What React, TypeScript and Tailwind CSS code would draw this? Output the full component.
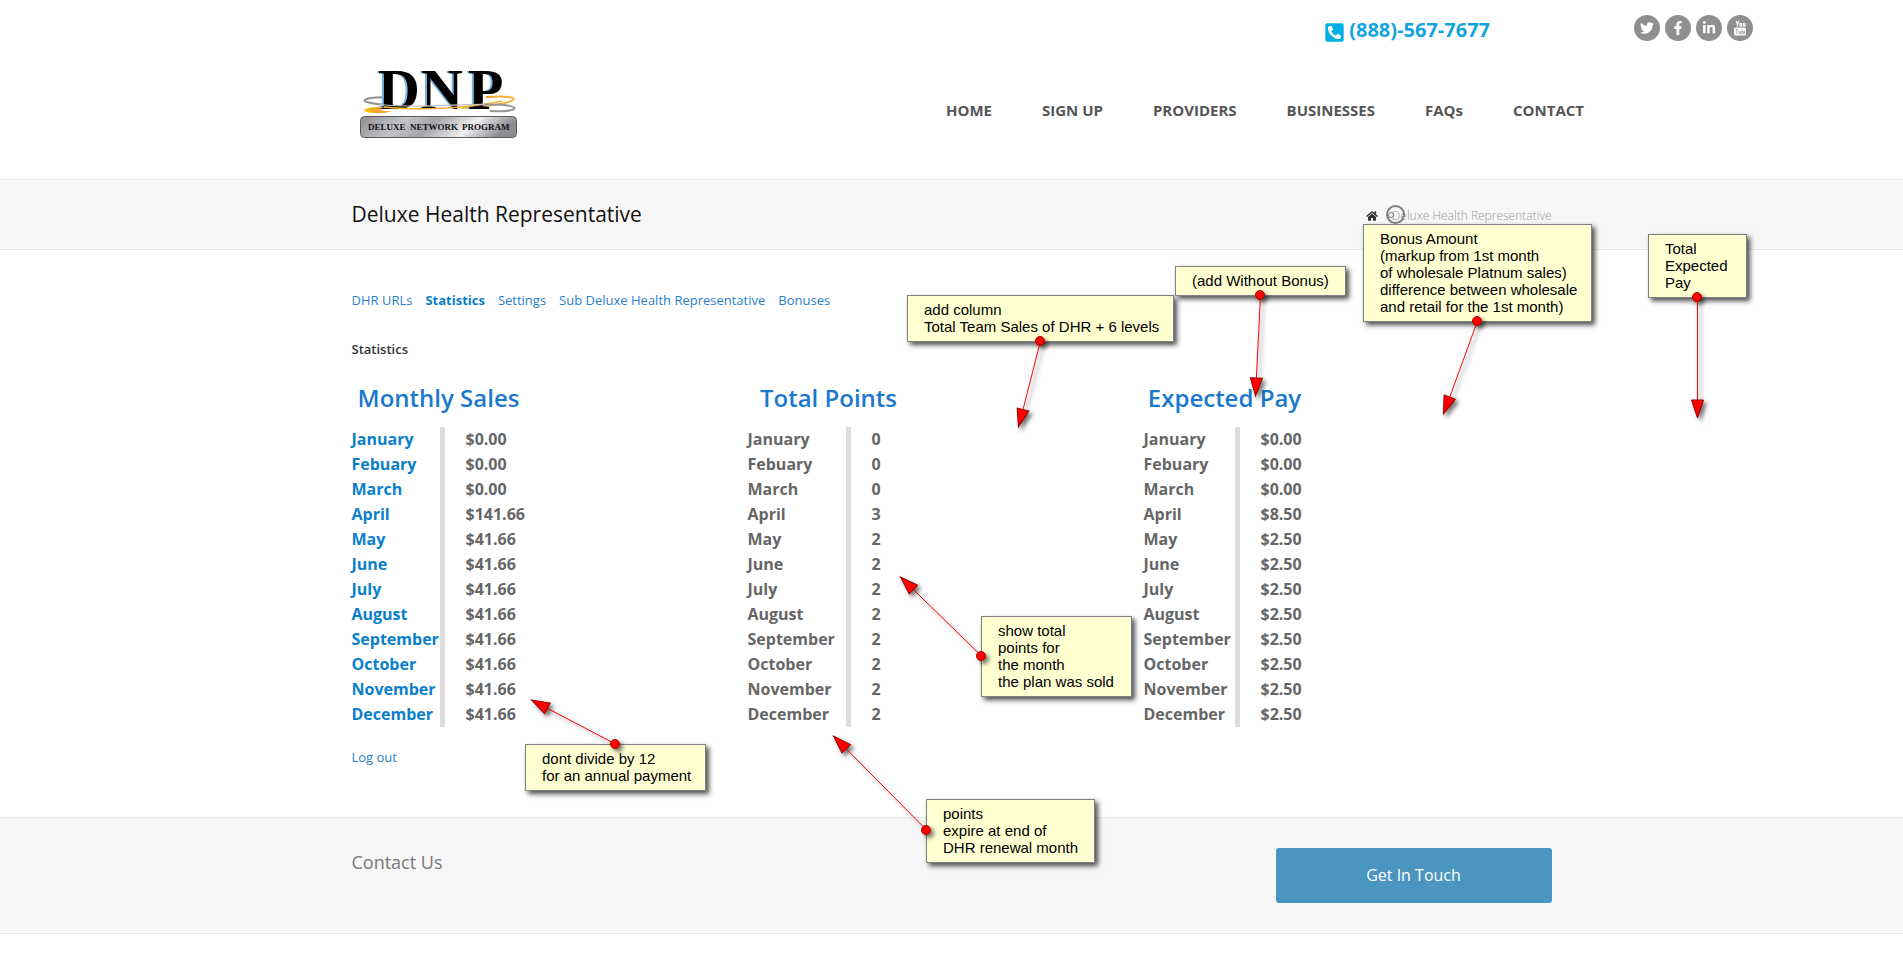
import {
    FaFacebookF,
    FaHome,
    FaLinkedinIn,
    FaPhoneSquareAlt,
    FaTwitter,
} from "react-icons/fa";

const navigation = ["HOME", "SIGN UP", "PROVIDERS", "BUSINESSES", "FAQs", "CONTACT"];

const tabs = [
    "DHR URLs",
    "Statistics",
    "Settings",
    "Sub Deluxe Health Representative",
    "Bonuses",
];

const months = [
    "January",
    "Febuary",
    "March",
    "April",
    "May",
    "June",
    "July",
    "August",
    "September",
    "October",
    "November",
    "December",
];

const statistics = [
    {
        title: "Monthly Sales",
        tableClass: "w-[174px]",
        colClass: "w-[93px]",
        monthClass: "text-[#0a80cc]",
        values: ["$0.00", "$0.00", "$0.00", "$141.66", ...Array(8).fill("$41.66")],
    },
    {
        title: "Total Points",
        tableClass: "w-[162px]",
        colClass: "w-[103px]",
        monthClass: "",
        values: ["0", "0", "0", "3", ...Array(8).fill("2")],
    },
    {
        title: "Expected Pay",
        tableClass: "w-[162px]",
        colClass: "w-[96px]",
        monthClass: "",
        values: ["$0.00", "$0.00", "$0.00", "$8.50", ...Array(8).fill("$2.50")],
    },
];

// Notes sit on a free canvas, measured from the left edge of the container
const notes = [
    {
        className: "left-[555px] top-[295px] w-[267px]",
        lines: ["add column", "Total Team Sales of DHR + 6 levels"],
        from: [688, 341],
        to: [666, 427],
    },
    {
        className: "left-[823px] top-[266px] w-[171px]",
        lines: ["(add Without Bonus)"],
        from: [908, 295],
        to: [903, 396],
    },
    {
        className: "left-[1011px] top-[224px] w-[229px]",
        lines: [
            "Bonus Amount",
            "(markup from 1st month",
            "of wholesale Platnum sales)",
            "difference between wholesale",
            "and retail for the 1st month)",
        ],
        from: [1125, 321],
        to: [1091, 414],
    },
    {
        className: "left-[1296px] top-[234px] w-[99px]",
        lines: ["Total", "Expected", "Pay"],
        from: [1345, 297],
        to: [1345, 418],
    },
    {
        className: "left-[173px] top-[744px] w-[181px]",
        lines: ["dont divide by 12", "for an annual payment"],
        from: [263, 744],
        to: [179, 700],
    },
    {
        className: "left-[629px] top-[616px] w-[151px]",
        lines: ["show total", "points for", "the month", "the plan was sold"],
        from: [629, 656],
        to: [548, 577],
    },
    {
        className: "left-[574px] top-[799px] w-[169px]",
        lines: ["points", "expire at end of", "DHR renewal month"],
        from: [574, 830],
        to: [481, 736],
    },
];

const Logo = () => (
    <svg
        className="shrink-0 overflow-visible"
        width="172"
        height="106"
        viewBox="352 57 172 106"
        role="img"
        aria-label="Deluxe Network Program"
    >
        <defs>
            <linearGradient id="plate" x1="0" x2="1" y1="0" y2="0.15">
                <stop offset="0" stopColor="#8d8d92" />
                <stop offset="0.3" stopColor="#c4c4c8" />
                <stop offset="0.5" stopColor="#a5a5aa" />
                <stop offset="0.76" stopColor="#efeff1" />
                <stop offset="1" stopColor="#8b8b90" />
            </linearGradient>
            <linearGradient id="gold" x1="0" x2="1" y1="0" y2="0">
                <stop offset="0" stopColor="#fbc40c" />
                <stop offset="0.5" stopColor="#f0a030" />
                <stop offset="1" stopColor="#f7bc3a" />
            </linearGradient>
        </defs>
        <path
            d="M486 97 C506 96 517 97 513 100 C509 103 490 106 462 108"
            fill="none"
            stroke="url(#gold)"
            strokeWidth="2"
        />
        <path
            d="M388 97 C368 97 360 100 367 102 C374 104 384 105 398 106"
            fill="none"
            stroke="#909094"
            strokeWidth="2"
        />
        <g fontFamily="Liberation Serif, serif" fontWeight="700" fontSize="58">
            <g fill="#74b6e6">
                <text x="376" y="109">D</text>
                <text x="419" y="109">N</text>
                <text x="466" y="109">P</text>
            </g>
            <g fill="#000">
                <text x="378" y="109">D</text>
                <text x="421" y="109">N</text>
                <text x="468" y="109">P</text>
            </g>
        </g>
        <path
            d="M384 113 C362 114 359 109 372 107.5 C376 107 380 107 388 107 C378 108 376 110.5 392 111.5Z"
            fill="url(#gold)"
        />
        <path
            d="M384 107 C420 111 470 108 502 101"
            fill="none"
            stroke="url(#gold)"
            strokeWidth="1.4"
        />
        <path
            d="M380 104.5 C420 109 450 104 486 104.5"
            fill="none"
            stroke="#c4c4c8"
            strokeWidth="1.2"
        />
        <path
            d="M484 104.5 C508 104 519 107 513 109.5 C508 111.5 498 111.5 490 111"
            fill="none"
            stroke="#98989c"
            strokeWidth="2"
        />
        <rect
            x="360.5"
            y="116.5"
            width="156"
            height="21"
            rx="4"
            fill="url(#plate)"
            stroke="#5c5c60"
        />
        <g
            fill="#111"
            fontFamily="Liberation Serif, serif"
            fontWeight="700"
            fontSize="9"
        >
            <text x="368" y="130">DELUXE</text>
            <text x="410" y="130">NETWORK</text>
            <text x="462" y="130">PROGRAM</text>
        </g>
    </svg>
);

const YoutubeIcon = () => (
    <svg width="14" height="16" viewBox="0 0 14 16" aria-hidden="true">
        <path
            d="M3 1 4.5 4v2.5M6 1 4.5 4M7 3.5v2.5h1.5V3.5ZM10.500 3V6h1.500V3"
            fill="none"
            stroke="#fff"
            strokeWidth="1.2"
        />
        <rect x="1" y="7.5" width="12" height="8" rx="1.5" fill="#fff" />
        <path
            d="M2.5 9.5h2.5M3.7 9.5V14M6 11v3h1.5v-3M9 9v5h1.2v-2.5H9M12 13.5h-.8v-2h.8"
            fill="none"
            stroke="#8f8f8f"
            strokeWidth="0.7"
        />
    </svg>
);

const socials = [
    { name: "Twitter", icon: <FaTwitter size={14} /> },
    { name: "Facebook", icon: <FaFacebookF size={14} /> },
    { name: "LinkedIn", icon: <FaLinkedinIn size={14} /> },
    { name: "YouTube", icon: <YoutubeIcon /> },
];

const Header = () => (
    <header className="mx-auto max-w-[1603px] pt-[15px]">
        <div className="flex h-[26px] items-center justify-end gap-36">
            <a
                className="flex items-center gap-1 pt-1 text-[20px] leading-6 font-bold text-[#12a5dc]"
                href="#phone"
            >
                <FaPhoneSquareAlt className="mt-1 text-[#00aee6]" size={21} />
                (888)-567-7677
            </a>
            <div className="flex gap-[5px]">
                {socials.map((item) => (
                    <a
                        className="flex size-[26px] items-center justify-center rounded-full bg-[#8f8f8f] text-white"
                        href="#social"
                        aria-label={item.name}
                        key={item.name}
                    >
                        {item.icon}
                    </a>
                ))}
            </div>
        </div>
        <div className="flex items-center justify-between py-4 pr-[169px] pl-[202px]">
            <Logo />
            <nav className="flex gap-[50px] text-[15px] leading-6 font-bold whitespace-nowrap text-[#555]">
                {navigation.map((item) => (
                    <a href="#nav" key={item}>
                        {item}
                    </a>
                ))}
            </nav>
        </div>
    </header>
);

const TitleBar = () => (
    <div className="border-y border-[#e8e8e8] bg-[#f7f7f7]">
        <div className="mx-auto flex h-[69px] max-w-[1200px] items-center justify-between">
            <h1 className="pb-0.5 text-[21px] leading-7 text-[#111]">
                Deluxe Health Representative
            </h1>
            <div className="relative flex items-center gap-3.5 pt-0.5 text-[12px] leading-4 font-light text-[#999]">
                <a className="text-[#333]" href="#home" aria-label="Home">
                    <FaHome size={12} />
                </a>
                Deluxe Health Representative
                <span className="absolute top-[-1px] left-5 size-[19px] rounded-full border-2 border-[#808080]" />
                <span className="absolute top-[6px] left-[22px] size-1.5 rounded-full border border-[#777]" />
            </div>
        </div>
    </div>
);

const Notes = () => (
    <div className="absolute inset-x-0 top-0 mx-auto max-w-[1199px]">
        {notes.map((note) => (
            <div
                className={`absolute border border-[#808080] bg-[#ffffd2] pt-[5px] pb-[6px] pl-4 font-['Liberation_Sans',Arial,sans-serif] text-[15px] leading-[17px] whitespace-nowrap text-black shadow-[3px_3px_5px_rgba(0,0,0,0.7)] ${note.className}`}
                key={note.lines[0]}
            >
                {note.lines.map((line) => (
                    <div key={line}>{line}</div>
                ))}
            </div>
        ))}
        <svg
            className="pointer-events-none absolute top-0 left-0 overflow-visible drop-shadow-[3px_3px_2px_rgba(0,0,0,0.55)]"
            width="1199"
            height="900"
            aria-hidden="true"
        >
            {notes.map(({ from, to, lines }) => {
                const angle =
                    (Math.atan2(to[1] - from[1], to[0] - from[0]) * 180) / Math.PI;
                return (
                    <g key={lines[0]}>
                        <line
                            x1={from[0] + 0.5}
                            y1={from[1]}
                            x2={to[0] + 0.5}
                            y2={to[1]}
                            stroke="#f00"
                        />
                        <path
                            d="M0 0 L-18 -6 L-18 6 Z"
                            transform={`translate(${to[0] + 0.5} ${to[1]}) rotate(${angle})`}
                            fill="#f00"
                            stroke="#900"
                        />
                        <circle
                            cx={from[0]}
                            cy={from[1]}
                            r="4.5"
                            fill="#f00"
                            stroke="#a00"
                        />
                    </g>
                );
            })}
        </svg>
    </div>
);

const App = () => (
    <div className="relative min-h-screen overflow-x-hidden bg-white font-['Open_Sans',sans-serif] text-[13px] leading-5 text-[#666]">
        <Header />
        <TitleBar />
        <main className="mx-auto max-w-[1200px] pt-10 pb-[50px]">
            <nav className="flex gap-[13px] text-[#2a7fc9]">
                {tabs.map((item) => (
                    <a
                        className={item === "Statistics" ? "font-bold text-[#0a80cc]" : ""}
                        href="#tab"
                        key={item}
                    >
                        {item}
                    </a>
                ))}
            </nav>
            <h2 className="mt-[29px] font-semibold text-[#333]">Statistics</h2>
            <div className="mt-5 grid grid-cols-3 pr-3">
                {statistics.map((item) => (
                    <div key={item.title}>
                        <table
                            className={`table-fixed border-separate border-spacing-0 ${item.tableClass}`}
                        >
                            <colgroup>
                                <col className={item.colClass} />
                                <col />
                            </colgroup>
                            <thead>
                                <tr>
                                    <th
                                        className="h-12 p-0 pb-2.5 text-[24px] leading-8 font-semibold whitespace-nowrap text-[#1b78cf]"
                                        colSpan={2}
                                    >
                                        {item.title}
                                    </th>
                                </tr>
                            </thead>
                            <tbody className="text-[16px] leading-[25px] font-bold">
                                {months.map((month, index) => (
                                    <tr key={month}>
                                        <td
                                            className={`border-r-5 border-[#ddd] p-0 ${item.monthClass}`}
                                        >
                                            {month}
                                        </td>
                                        <td className="p-0 pl-[21px]">
                                            {item.values[index]}
                                        </td>
                                    </tr>
                                ))}
                            </tbody>
                        </table>
                    </div>
                ))}
            </div>
            <a className="mt-5 inline-block text-[#2a7fc9]" href="#logout">
                Log out
            </a>
        </main>
        <footer className="border-y border-[#e8e8e8] bg-[#f7f7f7]">
            <div className="mx-auto flex max-w-[1200px] items-start justify-between py-[30px]">
                <h2 className="text-[18px] leading-7 text-[#777]">Contact Us</h2>
                <button className="h-[55px] w-[276px] rounded-[3px] bg-[#4a96c1] pb-0.5 text-[16px] text-white">
                    Get In Touch
                </button>
            </div>
        </footer>
        <Notes />
    </div>
);

export default App;
